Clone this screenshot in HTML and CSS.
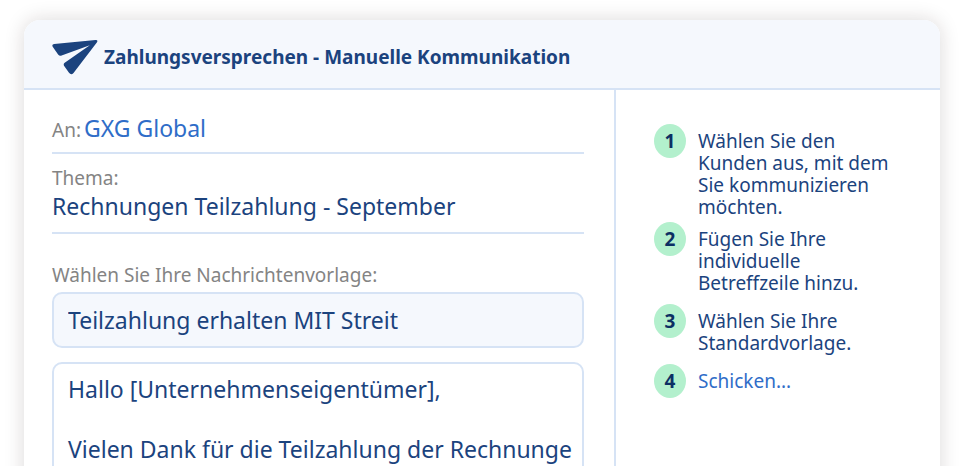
FILE: index.html
```html
<!DOCTYPE html>
<html lang="de">
<head>
    <meta charset="UTF-8">
    <meta name="viewport" content="width=device-width, initial-scale=1.0">
    <title>Zahlungsversprechen</title>
    <link rel="stylesheet" href="styles.css">
</head>
<body>

<main class="card">
    <header class="card-header">
        <svg class="plane" viewBox="0 0 46 36" aria-hidden="true">
            <path d="M2.2 5 L43.5 .9 Q46.3 .7 45 3.2 L21.5 33.9 Q19.2 36.4 17 33.8 L12.2 27 Q11 25.2 12.7 23.8 L37.8 6.2 L9.6 16.6 Q7.4 17.3 6.1 15.4 L.7 7.8 Q-.5 5.3 2.2 5 Z"/>
        </svg>
        <h1>Zahlungsversprechen - Manuelle Kommunikation</h1>
    </header>

    <div class="card-body">
        <form class="compose">
            <div class="field field-inline">
                <label for="recipient">An:</label>
                <input type="text" id="recipient" class="recipient" value="GXG Global">
            </div>
            <div class="field">
                <label for="subject">Thema:</label>
                <input type="text" id="subject" value="Rechnungen Teilzahlung - September">
            </div>
            <label for="template" class="template-label">Wählen Sie Ihre Nachrichtenvorlage:</label>
            <select id="template" class="box">
                <option>Teilzahlung erhalten MIT Streit</option>
            </select>
            <textarea id="message" class="box" rows="6" wrap="off" aria-label="Nachricht">Hallo [Unternehmenseigentümer],

Vielen Dank für die Teilzahlung der Rechnunge</textarea>
        </form>

        <aside>
            <ol class="steps">
                <li class="step step-long"><span class="number">1</span><p>Wählen Sie den Kunden aus, mit dem Sie kommunizieren möchten.</p></li>
                <li class="step"><span class="number">2</span><p>Fügen Sie Ihre individuelle Betreffzeile hinzu.</p></li>
                <li class="step"><span class="number">3</span><p>Wählen Sie Ihre Standardvorlage.</p></li>
                <li class="step"><span class="number">4</span><p><a href="#">Schicken...</a></p></li>
            </ol>
        </aside>
    </div>
</main>

</body>
</html>
```

FILE: styles.css
```css
* { box-sizing: border-box; }
body { margin: 0; padding: 20px 40px 0 24px; height: 100vh; overflow: hidden; background: white; color: #1b437e; font-family: "Noto Sans", sans-serif; }
h1, p { margin: 0; }

.card { background: white; border-radius: 16px; box-shadow: 0 0 20px rgba(40,20,20,0.16); }
.card-header { display: flex; align-items: center; gap: 6px; padding: 19px 28px 13px; background: #f5f8fd; border-bottom: 2px solid #d6e3f5; border-radius: 16px 16px 0 0; }
.card-header h1 { font-size: 19px; line-height: 36px; font-weight: 700; }
.plane { width: 46px; height: 36px; fill: #1b437e; }
.card-body { display: grid; grid-template-columns: minmax(0, 1fr) 324px; }

.compose { padding: 0 30px 28px 28px; border-right: 2px solid #d6e3f5; }
.compose label { color: #848484; font-size: 19px; line-height: 24px; }
.compose input, .compose select, .compose textarea { display: block; width: 100%; margin: 0; font-family: inherit; font-size: 23px; line-height: 30px; color: #1b437e; outline: none; }
.compose input { height: 32px; padding: 0; border: none; background: none; }
.field { padding: 12px 0 10px; border-bottom: 2px solid #d6e3f5; }
.field label { display: block; }
.field-inline { display: flex; align-items: baseline; gap: 3px; padding: 22px 0 8px; }
.compose .recipient { color: #2f6dc8; }
.template-label { display: block; margin-top: 29px; }

.compose .box { border: 2px solid #d6e3f5; border-radius: 10px; }
.compose select.box { appearance: none; height: 56px; margin-top: 5px; padding: 0 14px; background: #f5f8fd; }
.compose textarea.box { margin-top: 14px; padding: 10px 0 10px 14px; background: white; resize: none; overflow: hidden; }

.steps { list-style: none; margin: 0; padding: 34px 38px; }
.step { display: flex; align-items: flex-start; gap: 12px; margin-bottom: 10px; font-size: 19px; line-height: 22px; }
.step-long { margin-bottom: 4px; }
.step p { padding-top: 6px; }
.step a { color: #2f6dc8; text-decoration: none; }
.number { flex: none; width: 32px; border-radius: 50%; background: #b3f0cd; color: #0c2f63; font-weight: 700; line-height: 34px; text-align: center; }
```
